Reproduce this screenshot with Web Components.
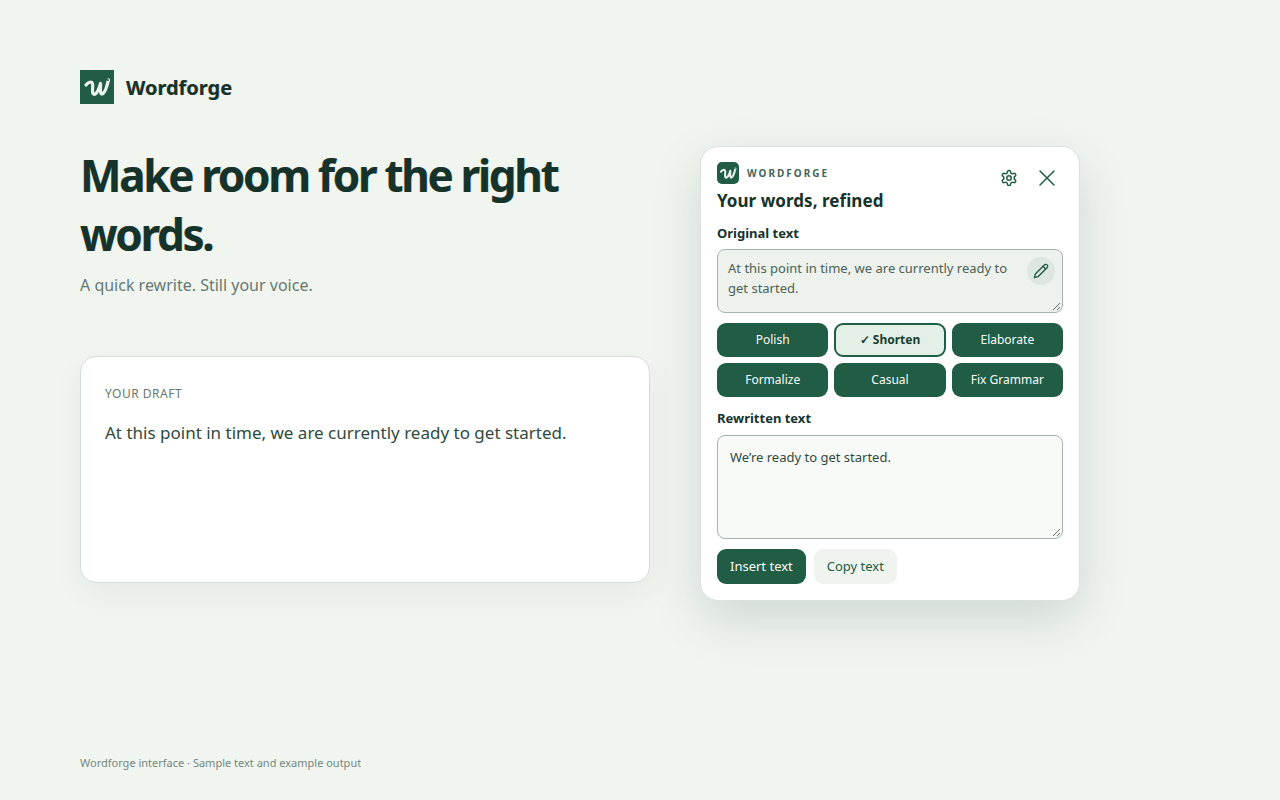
<!DOCTYPE html>
<html><head><meta charset="utf-8"><style>
html,body{margin:0;height:100%}
body{background:#f1f5f0;font-family:"Noto Sans",sans-serif;color:#16332b;}
</style></head><body>
<wf-page></wf-page>
<script>
const LOGO=`<svg viewBox="0 0 34 34" width="100%" height="100%" style="display:block"><path d="M6 15c2-3 5.500-4 6.500-1.500 1 2.500-1 7 .5 10 1.200 2 3.500 0 5-3 1.200-2.500 1.800-4.500 2.500-7 .3 3.500-.8 8 .6 10 1.500 1.500 3.500-1.500 4.700-4.500 1-2.500 1.700-5 2.700-9" fill="none" stroke="#eaf3ed" stroke-width="3.200" stroke-linecap="round" stroke-linejoin="round"/><circle cx="27.800" cy="10" r="1" fill="#215c45"/></svg>`;
class WfPage extends HTMLElement{constructor(){super();this.attachShadow({mode:'open'}).innerHTML=`<style>
:host{display:grid;grid-template-columns:570px 380px;column-gap:50px;padding:70px 0 0 80px;height:800px;box-sizing:border-box;position:relative}
.left{display:flex;flex-direction:column}
.brand{display:flex;align-items:center;gap:12px;font-size:20px;font-weight:700;color:#16332b;height:34px}
.brand,h1{text-shadow:-.35px 0 rgba(214,130,40,.45),.35px 0 rgba(30,130,220,.45)}
.logo{width:34px;height:34px;background:#215c45}
h1{margin:42px 0 0;font-size:44px;line-height:59px;font-weight:700;letter-spacing:-2.3px;color:#16332b}
.sub{margin-top:9px;font-size:16px;color:#66796f;line-height:24px}
.footer{position:absolute;left:80px;top:755px;font-size:11px;line-height:16px;color:#75877d}
.right{padding-top:76px}
</style><div class="left"><div class="brand"><div class="logo">${LOGO}</div>Wordforge</div><h1>Make room for the right words.</h1><div class="sub">A quick rewrite. Still your voice.</div><wf-draft></wf-draft></div><div class="right"><wf-panel></wf-panel></div><div class="footer">Wordforge interface · Sample text and example output</div>`}}
class WfDraft extends HTMLElement{constructor(){super();this.attachShadow({mode:'open'}).innerHTML=`<style>
:host{display:block;margin-top:59px;height:227px;box-sizing:border-box;background:#fff;border:1px solid #d3ddd6;border-radius:16px;padding:28px 24px;box-shadow:0 12px 30px rgba(30,70,50,.06)}
.l{font-size:12px;line-height:18px;color:#66796f;letter-spacing:.5px}
.t{margin-top:17px;font-size:17px;line-height:26px;color:#2f4a40}
</style><div class="l">YOUR DRAFT</div><div class="t">At this point in time, we are currently ready to get started.</div>`}}
class WfBtn extends HTMLElement{constructor(){super();this.attachShadow({mode:'open'}).innerHTML=`<style>
:host{display:flex;align-items:center;justify-content:center;height:34px;box-sizing:border-box;border-radius:9px;background:#215c45;color:#fafdfb;font-size:12px;padding-bottom:2px}
:host([active]){background:#e2f0e8;border:2px solid #215c45;color:#16402f;font-weight:700}
</style><slot></slot>`}}
class WfPanel extends HTMLElement{constructor(){super();this.attachShadow({mode:'open'}).innerHTML=`<style>
:host{display:block;width:380px;height:455px;box-sizing:border-box;background:#fff;border:1px solid #d9e2dc;border-radius:18px;padding:15px 16px;box-shadow:0 18px 50px rgba(30,70,50,.16)}
.head{display:flex;justify-content:space-between;height:62px}
.mark{display:flex;align-items:center;gap:8px;font-size:10px;font-weight:700;letter-spacing:2px;color:#44655a;height:22px}
.logo{width:22px;height:22px;background:#215c45;border-radius:5px;overflow:hidden}
h2{margin:4px 0 0;font-size:17px;line-height:25px;font-weight:700;letter-spacing:.05px;color:#16332b}
.icons{display:flex;gap:14px;margin-top:0;margin-right:4px}
.ib{width:24px;height:32px;display:flex;align-items:center;justify-content:center}
.lab{font-size:13px;font-weight:700;line-height:18px;color:#16332b}
.orig{position:relative;margin-top:7px;height:64px;box-sizing:border-box;border:1px solid #a3b5aa;border-radius:8px;background:#edf2ec;padding:8px 10px;font-size:13px;line-height:20px;color:#4c6157}
.orig span{display:block;width:290px}
.edit{position:absolute;right:7px;top:7px;width:28px;height:28px;border-radius:50%;background:#dde6df;display:flex;align-items:center;justify-content:center}
.grip{position:absolute;right:1px;bottom:1px}
.grid{display:grid;grid-template-columns:repeat(3,1fr);gap:6px;margin-top:10px}
.rew{position:relative;margin-top:8px;height:104px;box-sizing:border-box;border:1px solid #a3b5aa;border-radius:8px;background:#f8faf7;padding:11px 12px;font-size:13px;line-height:20px;color:#2f4a40}
.acts{display:flex;gap:8px;margin-top:10px}
.a{height:35px;box-sizing:border-box;display:flex;align-items:center;padding:0 13px 1px;border-radius:9px;font-size:13px}
.p{background:#215c45;color:#fafdfb}.s{background:#eff4ee;color:#215c45}
</style>
<div class="head"><div><div class="mark"><div class="logo">${LOGO}</div>WORDFORGE</div><h2>Your words, refined</h2></div>
<div class="icons"><div class="ib"><svg width="18" height="18" viewBox="0 0 24 24" fill="none" stroke="#215c45" stroke-width="2" stroke-linecap="round" stroke-linejoin="round"><path d="M12.220 2h-.44a2 2 0 0 0-2 2v.18a2 2 0 0 1-1 1.730l-.43.25a2 2 0 0 1-2 0l-.15-.08a2 2 0 0 0-2.730.73l-.22.38a2 2 0 0 0 .73 2.730l.15.1a2 2 0 0 1 1 1.720v.51a2 2 0 0 1-1 1.740l-.15.09a2 2 0 0 0-.73 2.730l.22.38a2 2 0 0 0 2.730.73l.15-.08a2 2 0 0 1 2 0l.43.25a2 2 0 0 1 1 1.730V20a2 2 0 0 0 2 2h.44a2 2 0 0 0 2-2v-.18a2 2 0 0 1 1-1.730l.43-.25a2 2 0 0 1 2 0l.15.08a2 2 0 0 0 2.730-.73l.22-.39a2 2 0 0 0-.73-2.730l-.15-.08a2 2 0 0 1-1-1.740v-.5a2 2 0 0 1 1-1.740l.15-.09a2 2 0 0 0 .73-2.730l-.22-.38a2 2 0 0 0-2.730-.73l-.15.08a2 2 0 0 1-2 0l-.43-.25a2 2 0 0 1-1-1.730V4a2 2 0 0 0-2-2z"/><circle cx="12" cy="12" r="3"/></svg></div>
<div class="ib"><svg width="24" height="24" viewBox="0 0 24 24" fill="none" stroke="#215c45" stroke-width="1.500" stroke-linecap="round"><path d="M5 5l14 14M19 5L5 19"/></svg></div></div></div>
<div class="lab">Original text</div>
<div class="orig"><span>At this point in time, we are currently ready to get started.</span><div class="edit"><svg width="16" height="16" viewBox="0 0 24 24" fill="none" stroke="#215c45" stroke-width="2" stroke-linecap="round" stroke-linejoin="round"><path d="M17 3a2.850 2.830 0 1 1 4 4L7.500 20.500 2 22l1.500-5.500z"/><path d="M15 5l4 4"/></svg></div><svg class="grip" width="10" height="10" viewBox="0 0 10 10" stroke="#5f6f66" fill="none"><path d="M9 2L2 9M9 6L6 9"/></svg></div>
<div class="grid"><wf-btn>Polish</wf-btn><wf-btn active>✓ Shorten</wf-btn><wf-btn>Elaborate</wf-btn><wf-btn>Formalize</wf-btn><wf-btn>Casual</wf-btn><wf-btn>Fix Grammar</wf-btn></div>
<div class="lab" style="margin-top:12px">Rewritten text</div>
<div class="rew">We’re ready to get started.<svg class="grip" width="10" height="10" viewBox="0 0 10 10" stroke="#5f6f66" fill="none"><path d="M9 2L2 9M9 6L6 9"/></svg></div>
<div class="acts"><div class="a p">Insert text</div><div class="a s">Copy text</div></div>`}}
customElements.define('wf-btn',WfBtn);customElements.define('wf-draft',WfDraft);customElements.define('wf-panel',WfPanel);customElements.define('wf-page',WfPage);
</script></body></html>
